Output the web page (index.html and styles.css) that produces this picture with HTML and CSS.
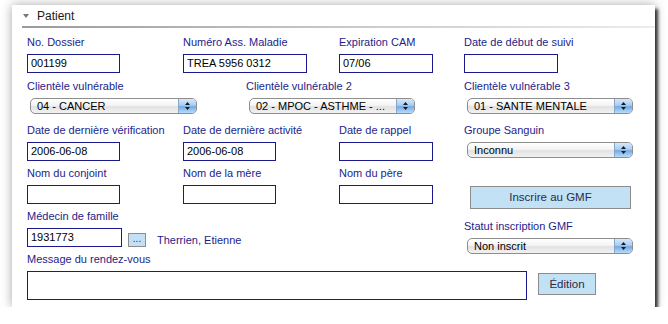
FILE: index.html
```html
<!DOCTYPE html>
<html lang="fr">
<head>
<meta charset="utf-8">
<title>Patient</title>
<link rel="stylesheet" href="styles.css">
</head>
<body>
<div class="panel">
  <div class="header">
    <span class="tri"></span>
    <span class="title">Patient</span>
  </div>
  <div class="form">
    <div class="left">
      <div class="row cols3">
        <div class="field"><div class="label">No. Dossier</div><div class="input w93">001199</div></div>
        <div class="field"><div class="label">Numéro Ass. Maladie</div><div class="input w124">TREA 5956 0312</div></div>
        <div class="field"><div class="label">Expiration CAM</div><div class="input w94">07/06</div></div>
      </div>
      <div class="row cols2 selrow">
        <div class="field"><div class="label">Clientèle vulnérable</div><div class="select"><span class="val">04 - CANCER</span><span class="arrows"><svg width="7" height="10" viewBox="0 0 7 10"><path d="M3.5 1 L6 4 L1 4 Z M3.5 9 L6 6 L1 6 Z" fill="#1a1a1a"/></svg></span></div></div>
        <div class="field"><div class="label">Clientèle vulnérable 2</div><div class="select"><span class="val">02 - MPOC - ASTHME - ...</span><span class="arrows"><svg width="7" height="10" viewBox="0 0 7 10"><path d="M3.5 1 L6 4 L1 4 Z M3.5 9 L6 6 L1 6 Z" fill="#1a1a1a"/></svg></span></div></div>
      </div>
      <div class="row cols3">
        <div class="field"><div class="label">Date de dernière vérification</div><div class="input w93">2006-06-08</div></div>
        <div class="field"><div class="label">Date de dernière activité</div><div class="input w93">2006-06-08</div></div>
        <div class="field"><div class="label">Date de rappel</div><div class="input w94"></div></div>
      </div>
      <div class="row cols3">
        <div class="field"><div class="label">Nom du conjoint</div><div class="input w93"></div></div>
        <div class="field"><div class="label">Nom de la mère</div><div class="input w93"></div></div>
        <div class="field"><div class="label">Nom du père</div><div class="input w94"></div></div>
      </div>
      <div class="row">
        <div class="field"><div class="label">Médecin de famille</div>
          <div class="medline"><div class="input w95">1931773</div><div class="btn dots">...</div><span class="doc">Therrien, Etienne</span></div>
        </div>
      </div>
      <div class="row msgrow">
        <div class="label">Message du rendez-vous</div>
        <div class="msgline"><div class="textarea"></div><div class="btn edit">Édition</div></div>
      </div>
    </div>
    <div class="right">
      <div class="row"><div class="field"><div class="label">Date de début de suivi</div><div class="input w94"></div></div></div>
      <div class="row selrow"><div class="field"><div class="label">Clientèle vulnérable 3</div><div class="select"><span class="val">01 - SANTE MENTALE</span><span class="arrows"><svg width="7" height="10" viewBox="0 0 7 10"><path d="M3.5 1 L6 4 L1 4 Z M3.5 9 L6 6 L1 6 Z" fill="#1a1a1a"/></svg></span></div></div></div>
      <div class="row"><div class="field"><div class="label">Groupe Sanguin</div><div class="select"><span class="val">Inconnu</span><span class="arrows"><svg width="7" height="10" viewBox="0 0 7 10"><path d="M3.5 1 L6 4 L1 4 Z M3.5 9 L6 6 L1 6 Z" fill="#1a1a1a"/></svg></span></div></div></div>
      <div class="btn gmf">Inscrire au GMF</div>
      <div class="row statut"><div class="field"><div class="label">Statut inscription GMF</div><div class="select"><span class="val">Non inscrit</span><span class="arrows"><svg width="7" height="10" viewBox="0 0 7 10"><path d="M3.5 1 L6 4 L1 4 Z M3.5 9 L6 6 L1 6 Z" fill="#1a1a1a"/></svg></span></div></div></div>
    </div>
  </div>
</div>
</body>
</html>
```
FILE: styles.css
```css
html, body {
  margin: 0;
  padding: 0;
  background: #ffffff;
}
body {
  font-family: "Liberation Sans", Arial, sans-serif;
  font-size: 11px;
  color: #000;
}
.panel {
  margin: 5px 0 0 12px;
  width: 643px;
  height: 302px;
  background: #fff;
  box-shadow: 3px 4px 3px rgba(0,0,0,0.75), 0 0 10px rgba(0,0,0,0.35);
  box-sizing: border-box;
}
.header {
  height: 21px;
  display: flex;
  align-items: center;
  border-bottom: 2px solid transparent;
  border-image: linear-gradient(to right, #9a9a9a, #c8c8c8 50%, #ececec) 1;
  margin-left: 10px;
  padding-left: 1px;
}
.tri {
  width: 0;
  height: 0;
  border-left: 3.5px solid transparent;
  border-right: 3.5px solid transparent;
  border-top: 4px solid #777;
  margin-right: 8px;
}
.title {
  font-size: 12px;
  color: #1a1a1a;
}
.form {
  display: flex;
  padding: 7px 0 0 15px;
}
.left {
  width: 437px;
  flex-shrink: 0;
}
.right {
  flex: 1;
}
.row + .row {
  margin-top: 5px;
}
.row.selrow + .row {
  margin-top: 9px;
}
.row.selrow {
  margin-top: 6px;
}
.cols3 {
  display: grid;
  grid-template-columns: 156px 156px 125px;
}
.cols2 {
  display: grid;
  grid-template-columns: 219px 218px;
}
.label {
  line-height: 14px;
  height: 14px;
  margin-bottom: 5px;
  color: #1d1d8a;
  white-space: nowrap;
}
.input {
  box-sizing: border-box;
  height: 19px;
  border: 1px solid #1a1a8e;
  padding: 0 3px;
  line-height: 17px;
  background: #fff;
  white-space: nowrap;
  overflow: hidden;
}
.w93 { width: 93px; }
.w94 { width: 94px; }
.w95 { width: 95px; }
.w124 { width: 124px; }
.select {
  box-sizing: border-box;
  margin-left: 3px;
  width: 166px;
  height: 16px;
  border: 1px solid #8e8e8e;
  border-radius: 5px;
  background: linear-gradient(#ffffff, #f4f4f4 45%, #e2e2e2 55%, #f2f2f2);
  display: flex;
  align-items: center;
  overflow: hidden;
  box-shadow: inset 0 1px 0 #fff;
}
.val {
  flex: 1;
  padding-left: 6px;
  line-height: 14px;
  white-space: nowrap;
  overflow: hidden;
}
.arrows {
  width: 17px;
  height: 14px;
  border-left: 1px solid #8aa6c6;
  background: linear-gradient(#d7e8fa, #a8cdf2 45%, #72aae6 55%, #b9dcfb);
  display: flex;
  align-items: center;
  justify-content: center;
}
.cols2 .field:first-child .select { width: 167px; }
.btn {
  box-sizing: border-box;
  border: 1px solid #8c8c8c;
  background: #c2e1f4;
  color: #2b2b4a;
  text-align: center;
}
.gmf {
  width: 161px;
  height: 23px;
  line-height: 21px;
  margin: 28px 0 0 6px;
  font-size: 11.5px;
}
.row.statut {
  margin-top: 10px;
}
.medline {
  display: flex;
  align-items: flex-start;
}
.dots {
  width: 18px;
  height: 14px;
  margin: 5px 0 0 6px;
  line-height: 10px;
  font-size: 10px;
  color: #333;
}
.doc {
  margin: 5px 0 0 11px;
  line-height: 14px;
  color: #1d1d8a;
}
.msgline {
  display: flex;
  align-items: flex-start;
  width: max-content;
}
.textarea {
  box-sizing: border-box;
  width: 500px;
  height: 29px;
  border: 1px solid #1a1a8e;
  background: #fff;
}
.edit {
  width: 58px;
  height: 22px;
  line-height: 20px;
  margin: 2px 0 0 11px;
  font-size: 11.5px;
}
```
